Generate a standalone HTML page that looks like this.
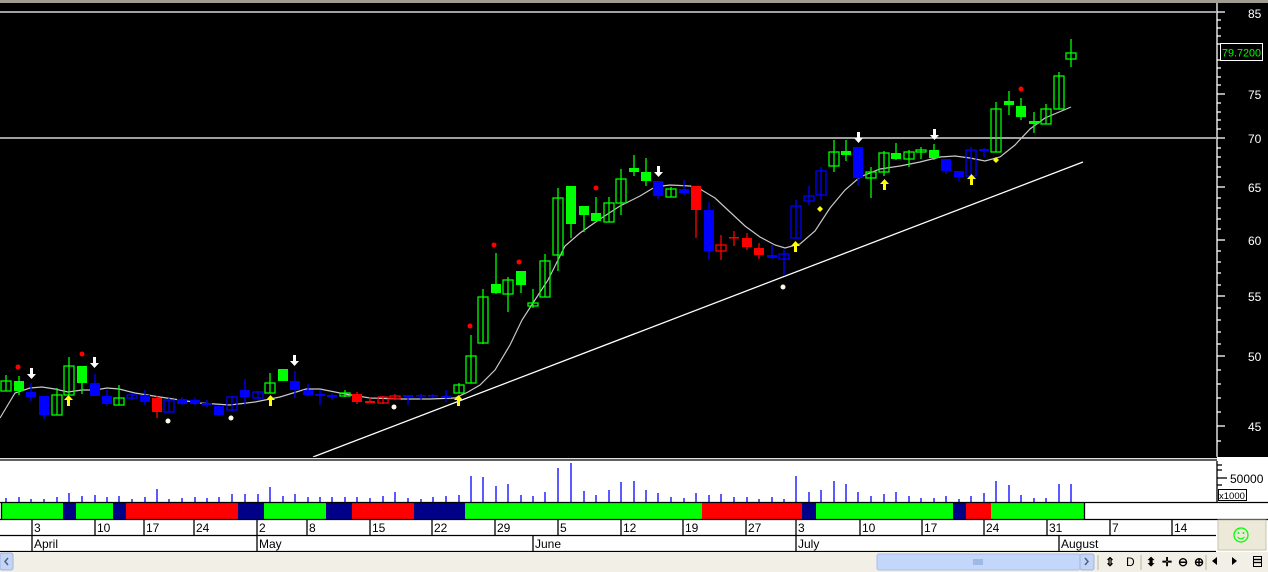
<!DOCTYPE html><html><head><meta charset="utf-8"><style>
body{margin:0;width:1268px;height:572px;overflow:hidden;background:#fff;font-family:"Liberation Sans",sans-serif}
svg{position:absolute;left:0;top:0}
.G line,.Gh line{stroke:#0f0}.B line,.Bh line{stroke:#00f}.R line,.Rh line{stroke:#f00}
line{stroke-width:1.3}
.G rect{fill:#0f0}.B rect{fill:#00f}.R rect{fill:#f00}
.Gh rect{fill:none;stroke:#0f0;stroke-width:1.3}.Bh rect{fill:none;stroke:#00f;stroke-width:1.3}.Rh rect{fill:none;stroke:#f00;stroke-width:1.3}
text{font-family:"Liberation Sans",sans-serif}
</style></head><body>
<svg width="1268" height="572" viewBox="0 0 1268 572">
<rect x="0" y="0" width="1268" height="3" fill="#a09c90"/>
<rect x="0" y="3" width="1268" height="454" fill="#000"/>
<line x1="0" y1="12" x2="1216" y2="12" stroke="#fff" stroke-width="1.5"/>
<line x1="0" y1="138" x2="1216" y2="138" stroke="#fff" stroke-width="1.5"/>
<line x1="1217" y1="3" x2="1217" y2="457" stroke="#fff"/>
<g stroke="#fff" stroke-width="1">
<line x1="1217" y1="12" x2="1225" y2="12"/><line x1="1217" y1="94" x2="1225" y2="94"/><line x1="1217" y1="138" x2="1225" y2="138"/><line x1="1217" y1="187" x2="1225" y2="187"/><line x1="1217" y1="240" x2="1225" y2="240"/><line x1="1217" y1="296" x2="1225" y2="296"/><line x1="1217" y1="356" x2="1225" y2="356"/><line x1="1217" y1="426" x2="1225" y2="426"/>
<line x1="1217" y1="20" x2="1221" y2="20"/><line x1="1217" y1="28" x2="1221" y2="28"/><line x1="1217" y1="36" x2="1221" y2="36"/><line x1="1217" y1="44" x2="1221" y2="44"/><line x1="1217" y1="60" x2="1221" y2="60"/><line x1="1217" y1="68" x2="1221" y2="68"/><line x1="1217" y1="77" x2="1221" y2="77"/><line x1="1217" y1="85" x2="1221" y2="85"/><line x1="1217" y1="103" x2="1221" y2="103"/><line x1="1217" y1="112" x2="1221" y2="112"/><line x1="1217" y1="120" x2="1221" y2="120"/><line x1="1217" y1="129" x2="1221" y2="129"/><line x1="1217" y1="148" x2="1221" y2="148"/><line x1="1217" y1="157" x2="1221" y2="157"/><line x1="1217" y1="167" x2="1221" y2="167"/><line x1="1217" y1="177" x2="1221" y2="177"/><line x1="1217" y1="198" x2="1221" y2="198"/><line x1="1217" y1="208" x2="1221" y2="208"/><line x1="1217" y1="219" x2="1221" y2="219"/><line x1="1217" y1="229" x2="1221" y2="229"/><line x1="1217" y1="251" x2="1221" y2="251"/><line x1="1217" y1="262" x2="1221" y2="262"/><line x1="1217" y1="273" x2="1221" y2="273"/><line x1="1217" y1="285" x2="1221" y2="285"/><line x1="1217" y1="308" x2="1221" y2="308"/><line x1="1217" y1="320" x2="1221" y2="320"/><line x1="1217" y1="332" x2="1221" y2="332"/><line x1="1217" y1="344" x2="1221" y2="344"/><line x1="1217" y1="370" x2="1221" y2="370"/><line x1="1217" y1="384" x2="1221" y2="384"/><line x1="1217" y1="398" x2="1221" y2="398"/><line x1="1217" y1="412" x2="1221" y2="412"/><line x1="1217" y1="441" x2="1221" y2="441"/>
</g>
<g fill="#fff" font-size="12">
<text x="1248" y="18">85</text><text x="1248" y="99">75</text><text x="1248" y="143">70</text><text x="1248" y="192">65</text><text x="1248" y="245">60</text><text x="1248" y="301">55</text><text x="1248" y="361">50</text><text x="1248" y="431">45</text>
</g>
<rect x="1220.5" y="43.5" width="42" height="17" fill="#000" stroke="#fff"/>
<text x="1222" y="56.5" fill="#0f0" font-size="11" textLength="39" lengthAdjust="spacingAndGlyphs">79.7200</text>
<line x1="313" y1="457" x2="1083" y2="162" stroke="#fff" stroke-width="1.5"/>
<polyline fill="none" stroke="#c8c8c8" stroke-width="1.2" points="0,418 15,393 30,388 42,387 55,389 68,392 82,390 95,390 107,388 119,389 135,393 160,397 200,403 230,405 255,402 280,397 306,389 320,389 345,394 370,398 400,399 430,399 455,398 468,392 480,385 495,370 510,345 522,320 533,303 548,280 565,246 580,233 600,219 620,206 640,196 655,187 670,185 690,186 700,189 715,198 730,212 745,226 760,237 775,245 785,248 800,244 815,231 830,208 845,190 860,177 880,169 900,166 920,162 940,157 955,156 970,158 985,161 1000,157 1015,145 1030,129 1045,118 1071,107"/>
<g class="Gh"><line x1="6" y1="375" x2="6" y2="391"/><rect x="1" y="381" width="10" height="10"/></g>
<g class="G"><line x1="19" y1="376" x2="19" y2="395"/><rect x="14" y="381" width="10" height="10"/></g>
<g class="B"><line x1="31" y1="383" x2="31" y2="401"/><rect x="26" y="392" width="10" height="5"/></g>
<g class="B"><line x1="44" y1="396" x2="44" y2="419"/><rect x="39" y="396" width="10" height="19"/></g>
<g class="Gh"><line x1="57" y1="388" x2="57" y2="415"/><rect x="52" y="395" width="10" height="20"/></g>
<g class="Gh"><line x1="69" y1="357" x2="69" y2="395"/><rect x="64" y="366" width="10" height="29"/></g>
<g class="G"><line x1="82" y1="366" x2="82" y2="394"/><rect x="77" y="366" width="10" height="17"/></g>
<g class="B"><line x1="95" y1="374" x2="95" y2="396"/><rect x="90" y="383" width="10" height="13"/></g>
<g class="B"><line x1="107" y1="390" x2="107" y2="406"/><rect x="102" y="396" width="10" height="8"/></g>
<g class="Gh"><line x1="119" y1="385" x2="119" y2="405"/><rect x="114" y="398" width="10" height="7"/></g>
<g class="Bh"><line x1="132" y1="393" x2="132" y2="400"/><rect x="127" y="395" width="10" height="3"/></g>
<g class="B"><line x1="145" y1="390" x2="145" y2="405"/><rect x="140" y="395" width="10" height="7"/></g>
<g class="R"><line x1="157" y1="396" x2="157" y2="418"/><rect x="152" y="398" width="10" height="14"/></g>
<g class="Bh"><line x1="169" y1="398" x2="169" y2="412"/><rect x="164" y="400" width="10" height="12"/></g>
<g class="B"><line x1="182" y1="397" x2="182" y2="405"/><rect x="177" y="399" width="10" height="5"/></g>
<g class="B"><line x1="195" y1="398" x2="195" y2="405"/><rect x="190" y="400" width="10" height="4"/></g>
<g class="B"><line x1="207" y1="400" x2="207" y2="407"/><rect x="202" y="403" width="10" height="2"/></g>
<g class="B"><line x1="219" y1="405" x2="219" y2="416"/><rect x="214" y="406" width="10" height="9"/></g>
<g class="Bh"><line x1="232" y1="396" x2="232" y2="411"/><rect x="227" y="397" width="10" height="13"/></g>
<g class="B"><line x1="245" y1="379" x2="245" y2="405"/><rect x="240" y="390" width="10" height="7"/></g>
<g class="Bh"><line x1="258" y1="391" x2="258" y2="399"/><rect x="253" y="392" width="10" height="6"/></g>
<g class="Gh"><line x1="270" y1="373" x2="270" y2="393"/><rect x="265" y="383" width="10" height="10"/></g>
<g class="G"><line x1="283" y1="369" x2="283" y2="381"/><rect x="278" y="369" width="10" height="12"/></g>
<g class="B"><line x1="295" y1="371" x2="295" y2="398"/><rect x="290" y="381" width="10" height="9"/></g>
<g class="B"><line x1="308" y1="384" x2="308" y2="396"/><rect x="303" y="390" width="10" height="5"/></g>
<g class="B"><line x1="320" y1="390" x2="320" y2="405"/><rect x="315" y="394" width="10" height="2"/></g>
<g class="B"><line x1="332" y1="393" x2="332" y2="400"/><rect x="327" y="395" width="10" height="2"/></g>
<g class="Gh"><line x1="345" y1="390" x2="345" y2="397"/><rect x="340" y="393" width="10" height="3"/></g>
<g class="R"><line x1="357" y1="392" x2="357" y2="404"/><rect x="352" y="394" width="10" height="8"/></g>
<g class="R"><line x1="370" y1="397" x2="370" y2="403"/><rect x="365" y="401" width="10" height="2"/></g>
<g class="Rh"><line x1="383" y1="396" x2="383" y2="404"/><rect x="378" y="397" width="10" height="6"/></g>
<g class="Rh"><line x1="395" y1="394" x2="395" y2="400"/><rect x="390" y="396" width="10" height="3"/></g>
<g class="B"><line x1="408" y1="395" x2="408" y2="405"/><rect x="403" y="395" width="10" height="2"/></g>
<g class="B"><line x1="421" y1="394" x2="421" y2="400"/><rect x="416" y="395" width="10" height="1.5"/></g>
<g class="B"><line x1="433" y1="394" x2="433" y2="398"/><rect x="428" y="395" width="10" height="1.5"/></g>
<g class="B"><line x1="446" y1="390" x2="446" y2="402"/><rect x="441" y="396" width="10" height="2"/></g>
<g class="Gh"><line x1="459" y1="383" x2="459" y2="393"/><rect x="454" y="385" width="10" height="8"/></g>
<g class="Gh"><line x1="471" y1="335" x2="471" y2="383"/><rect x="466" y="356" width="10" height="27"/></g>
<g class="Gh"><line x1="483" y1="289" x2="483" y2="344"/><rect x="478" y="297" width="10" height="46"/></g>
<g class="G"><line x1="496" y1="253" x2="496" y2="294"/><rect x="491" y="284" width="10" height="9"/></g>
<g class="Gh"><line x1="508" y1="277" x2="508" y2="312"/><rect x="503" y="280" width="10" height="14"/></g>
<g class="G"><line x1="521" y1="271" x2="521" y2="293"/><rect x="516" y="271" width="10" height="14"/></g>
<g class="Gh"><line x1="533" y1="289" x2="533" y2="308"/><rect x="528" y="303" width="10" height="3"/></g>
<g class="Gh"><line x1="545" y1="254" x2="545" y2="297"/><rect x="540" y="261" width="10" height="36"/></g>
<g class="Gh"><line x1="558" y1="188" x2="558" y2="271"/><rect x="553" y="198" width="10" height="57"/></g>
<g class="G"><line x1="571" y1="186" x2="571" y2="238"/><rect x="566" y="186" width="10" height="38"/></g>
<g class="G"><line x1="584" y1="206" x2="584" y2="232"/><rect x="579" y="206" width="10" height="9"/></g>
<g class="G"><line x1="596" y1="197" x2="596" y2="222"/><rect x="591" y="213" width="10" height="8"/></g>
<g class="Gh"><line x1="609" y1="197" x2="609" y2="222"/><rect x="604" y="203" width="10" height="19"/></g>
<g class="Gh"><line x1="621" y1="169" x2="621" y2="215"/><rect x="616" y="179" width="10" height="24"/></g>
<g class="G"><line x1="634" y1="155" x2="634" y2="176"/><rect x="629" y="168" width="10" height="4"/></g>
<g class="G"><line x1="646" y1="158" x2="646" y2="186"/><rect x="641" y="172" width="10" height="9"/></g>
<g class="B"><line x1="658" y1="181" x2="658" y2="199"/><rect x="653" y="181" width="10" height="15"/></g>
<g class="Gh"><line x1="671" y1="187" x2="671" y2="197"/><rect x="666" y="189" width="10" height="8"/></g>
<g class="B"><line x1="684" y1="180" x2="684" y2="195"/><rect x="679" y="189" width="10" height="4"/></g>
<g class="R"><line x1="696" y1="186" x2="696" y2="238"/><rect x="691" y="186" width="10" height="24"/></g>
<g class="B"><line x1="709" y1="202" x2="709" y2="260"/><rect x="704" y="210" width="10" height="41"/></g>
<g class="Rh"><line x1="721" y1="235" x2="721" y2="260"/><rect x="716" y="245" width="10" height="6"/></g>
<g class="R"><line x1="734" y1="231" x2="734" y2="246"/><rect x="729" y="237" width="10" height="1.5"/></g>
<g class="R"><line x1="747" y1="233" x2="747" y2="250"/><rect x="742" y="238" width="10" height="9"/></g>
<g class="R"><line x1="759" y1="243" x2="759" y2="259"/><rect x="754" y="248" width="10" height="7"/></g>
<g class="B"><line x1="772" y1="245" x2="772" y2="259"/><rect x="767" y="255" width="10" height="3"/></g>
<g class="Bh"><line x1="784" y1="250" x2="784" y2="276"/><rect x="779" y="254" width="10" height="5"/></g>
<g class="Bh"><line x1="796" y1="200" x2="796" y2="238"/><rect x="791" y="206" width="10" height="32"/></g>
<g class="Bh"><line x1="809" y1="186" x2="809" y2="205"/><rect x="804" y="196" width="10" height="5"/></g>
<g class="Bh"><line x1="821" y1="167" x2="821" y2="200"/><rect x="816" y="171" width="10" height="24"/></g>
<g class="Gh"><line x1="834" y1="140" x2="834" y2="172"/><rect x="829" y="152" width="10" height="14"/></g>
<g class="G"><line x1="846" y1="140" x2="846" y2="161"/><rect x="841" y="151" width="10" height="4"/></g>
<g class="B"><line x1="858" y1="147" x2="858" y2="186"/><rect x="853" y="147" width="10" height="31"/></g>
<g class="Gh"><line x1="871" y1="167" x2="871" y2="198"/><rect x="866" y="172" width="10" height="6"/></g>
<g class="Gh"><line x1="884" y1="151" x2="884" y2="176"/><rect x="879" y="153" width="10" height="19"/></g>
<g class="G"><line x1="896" y1="143" x2="896" y2="160"/><rect x="891" y="153" width="10" height="6"/></g>
<g class="Gh"><line x1="909" y1="150" x2="909" y2="167"/><rect x="904" y="152" width="10" height="7"/></g>
<g class="Gh"><line x1="921" y1="147" x2="921" y2="159"/><rect x="916" y="150" width="10" height="2"/></g>
<g class="G"><line x1="934" y1="144" x2="934" y2="160"/><rect x="929" y="150" width="10" height="8"/></g>
<g class="B"><line x1="946" y1="159" x2="946" y2="174"/><rect x="941" y="159" width="10" height="12"/></g>
<g class="B"><line x1="959" y1="171" x2="959" y2="181"/><rect x="954" y="171" width="10" height="6"/></g>
<g class="Bh"><line x1="971" y1="147" x2="971" y2="178"/><rect x="966" y="150" width="10" height="26"/></g>
<g class="B"><line x1="984" y1="148" x2="984" y2="157"/><rect x="979" y="149" width="10" height="2"/></g>
<g class="Gh"><line x1="996" y1="102" x2="996" y2="152"/><rect x="991" y="109" width="10" height="43"/></g>
<g class="G"><line x1="1009" y1="91" x2="1009" y2="115"/><rect x="1004" y="101" width="10" height="4"/></g>
<g class="G"><line x1="1021" y1="98" x2="1021" y2="120"/><rect x="1016" y="106" width="10" height="11"/></g>
<g class="G"><line x1="1034" y1="112" x2="1034" y2="133"/><rect x="1029" y="121" width="10" height="3"/></g>
<g class="Gh"><line x1="1046" y1="104" x2="1046" y2="124"/><rect x="1041" y="109" width="10" height="15"/></g>
<g class="Gh"><line x1="1059" y1="72" x2="1059" y2="109"/><rect x="1054" y="76" width="10" height="33"/></g>
<g class="Gh"><line x1="1071" y1="39" x2="1071" y2="67"/><rect x="1066" y="53" width="10" height="6"/></g>
<g fill="#f00"><circle cx="18" cy="367" r="2.5"/><circle cx="82" cy="354" r="2.5"/><circle cx="470" cy="326" r="2.5"/><circle cx="494" cy="245" r="2.5"/><circle cx="519" cy="262" r="2.5"/><circle cx="596" cy="188" r="2.5"/><circle cx="1021" cy="89" r="2.5"/></g>
<g fill="#fffbe8"><circle cx="168" cy="421" r="2.5"/><circle cx="231" cy="418" r="2.5"/><circle cx="394" cy="407" r="2.5"/><circle cx="783" cy="287" r="2.5"/></g>
<g fill="#ff0"><polygon points="820,206 823,209 820,212 817,209"/><polygon points="996,157 999,160 996,163 993,160"/></g>
<g fill="#fff">
<path d="M30,368h3v6h3l-4.5,5l-4.5,-5h3z"/><path d="M93,357h3v6h3l-4.5,5l-4.5,-5h3z"/><path d="M293,355h3v6h3l-4.5,5l-4.5,-5h3z"/><path d="M657,166h3v6h3l-4.5,5l-4.5,-5h3z"/><path d="M857,132h3v6h3l-4.5,5l-4.5,-5h3z"/><path d="M933,129h3v6h3l-4.5,5l-4.5,-5h3z"/>
</g>
<g fill="#ff0">
<path d="M67,406h3v-6h3l-4.5,-5l-4.5,5h3z"/><path d="M269,406h3v-6h3l-4.5,-5l-4.5,5h3z"/><path d="M457,406h3v-6h3l-4.5,-5l-4.5,5h3z"/><path d="M794,252h3v-6h3l-4.5,-5l-4.5,5h3z"/><path d="M883,190h3v-6h3l-4.5,-5l-4.5,5h3z"/><path d="M970,185h3v-6h3l-4.5,-5l-4.5,5h3z"/>
</g>
<rect x="0" y="457" width="1268" height="4" fill="#fff"/>
<line x1="0" y1="457.5" x2="1217" y2="457.5" stroke="#000" stroke-width="1"/>
<line x1="0" y1="460" x2="1217" y2="460" stroke="#000" stroke-width="1"/>
<line x1="1217" y1="461" x2="1217" y2="502" stroke="#000"/>
<g stroke="#000"><line x1="1217" y1="465" x2="1222" y2="465"/><line x1="1217" y1="470" x2="1222" y2="470"/><line x1="1217" y1="478" x2="1227" y2="478"/><line x1="1217" y1="485" x2="1222" y2="485"/></g>
<text x="1230" y="483" font-size="12" fill="#000">50000</text>
<rect x="1218.5" y="489.5" width="28" height="11" fill="#fff" stroke="#000"/>
<text x="1219" y="499" font-size="9.5" fill="#000">x1000</text>
<g stroke="#00f" stroke-width="3">
<line x1="6" y1="502" x2="6" y2="498"/><line x1="19" y1="502" x2="19" y2="497"/><line x1="31" y1="502" x2="31" y2="499"/><line x1="44" y1="502" x2="44" y2="499"/><line x1="57" y1="502" x2="57" y2="497"/><line x1="69" y1="502" x2="69" y2="493"/><line x1="82" y1="502" x2="82" y2="496"/><line x1="95" y1="502" x2="95" y2="495"/><line x1="107" y1="502" x2="107" y2="497"/><line x1="119" y1="502" x2="119" y2="496"/><line x1="132" y1="502" x2="132" y2="499"/><line x1="145" y1="502" x2="145" y2="497"/><line x1="157" y1="502" x2="157" y2="489"/><line x1="169" y1="502" x2="169" y2="499"/><line x1="182" y1="502" x2="182" y2="498"/><line x1="195" y1="502" x2="195" y2="497"/><line x1="207" y1="502" x2="207" y2="498"/><line x1="219" y1="502" x2="219" y2="497"/><line x1="232" y1="502" x2="232" y2="494"/><line x1="245" y1="502" x2="245" y2="494"/><line x1="258" y1="502" x2="258" y2="494"/><line x1="270" y1="502" x2="270" y2="487"/><line x1="283" y1="502" x2="283" y2="496"/><line x1="295" y1="502" x2="295" y2="494"/><line x1="308" y1="502" x2="308" y2="497"/><line x1="320" y1="502" x2="320" y2="497"/><line x1="332" y1="502" x2="332" y2="497"/><line x1="345" y1="502" x2="345" y2="497"/><line x1="357" y1="502" x2="357" y2="497"/><line x1="370" y1="502" x2="370" y2="498"/><line x1="383" y1="502" x2="383" y2="496"/><line x1="395" y1="502" x2="395" y2="492"/><line x1="408" y1="502" x2="408" y2="498"/><line x1="421" y1="502" x2="421" y2="499"/><line x1="433" y1="502" x2="433" y2="497"/><line x1="446" y1="502" x2="446" y2="496"/><line x1="459" y1="502" x2="459" y2="495"/><line x1="471" y1="502" x2="471" y2="476"/><line x1="483" y1="502" x2="483" y2="477"/><line x1="496" y1="502" x2="496" y2="486"/><line x1="508" y1="502" x2="508" y2="484"/><line x1="521" y1="502" x2="521" y2="495"/><line x1="533" y1="502" x2="533" y2="496"/><line x1="545" y1="502" x2="545" y2="492"/><line x1="558" y1="502" x2="558" y2="468"/><line x1="571" y1="502" x2="571" y2="463"/><line x1="584" y1="502" x2="584" y2="491"/><line x1="596" y1="502" x2="596" y2="495"/><line x1="609" y1="502" x2="609" y2="490"/><line x1="621" y1="502" x2="621" y2="482"/><line x1="634" y1="502" x2="634" y2="481"/><line x1="646" y1="502" x2="646" y2="490"/><line x1="658" y1="502" x2="658" y2="493"/><line x1="671" y1="502" x2="671" y2="497"/><line x1="684" y1="502" x2="684" y2="498"/><line x1="696" y1="502" x2="696" y2="493"/><line x1="709" y1="502" x2="709" y2="495"/><line x1="721" y1="502" x2="721" y2="494"/><line x1="734" y1="502" x2="734" y2="497"/><line x1="747" y1="502" x2="747" y2="497"/><line x1="759" y1="502" x2="759" y2="499"/><line x1="772" y1="502" x2="772" y2="497"/><line x1="784" y1="502" x2="784" y2="499"/><line x1="796" y1="502" x2="796" y2="476"/><line x1="809" y1="502" x2="809" y2="492"/><line x1="821" y1="502" x2="821" y2="490"/><line x1="834" y1="502" x2="834" y2="481"/><line x1="846" y1="502" x2="846" y2="484"/><line x1="858" y1="502" x2="858" y2="492"/><line x1="871" y1="502" x2="871" y2="496"/><line x1="884" y1="502" x2="884" y2="494"/><line x1="896" y1="502" x2="896" y2="492"/><line x1="909" y1="502" x2="909" y2="496"/><line x1="921" y1="502" x2="921" y2="498"/><line x1="934" y1="502" x2="934" y2="498"/><line x1="946" y1="502" x2="946" y2="496"/><line x1="959" y1="502" x2="959" y2="499"/><line x1="971" y1="502" x2="971" y2="496"/><line x1="984" y1="502" x2="984" y2="493"/><line x1="996" y1="502" x2="996" y2="481"/><line x1="1009" y1="502" x2="1009" y2="485"/><line x1="1021" y1="502" x2="1021" y2="495"/><line x1="1034" y1="502" x2="1034" y2="498"/><line x1="1046" y1="502" x2="1046" y2="498"/><line x1="1059" y1="502" x2="1059" y2="484"/><line x1="1071" y1="502" x2="1071" y2="484"/>
</g>
<rect x="0" y="502" width="1268" height="18" fill="#fff"/>
<rect x="1" y="502" width="62" height="17" fill="#0f0"/><rect x="63" y="502" width="13" height="17" fill="#008"/><rect x="76" y="502" width="37" height="17" fill="#0f0"/><rect x="113" y="502" width="13" height="17" fill="#008"/><rect x="126" y="502" width="112" height="17" fill="#f00"/><rect x="238" y="502" width="26" height="17" fill="#008"/><rect x="264" y="502" width="62" height="17" fill="#0f0"/><rect x="326" y="502" width="26" height="17" fill="#008"/><rect x="352" y="502" width="62" height="17" fill="#f00"/><rect x="414" y="502" width="51" height="17" fill="#008"/><rect x="465" y="502" width="237" height="17" fill="#0f0"/><rect x="702" y="502" width="100" height="17" fill="#f00"/><rect x="802" y="502" width="14" height="17" fill="#008"/><rect x="816" y="502" width="137" height="17" fill="#0f0"/><rect x="953" y="502" width="13" height="17" fill="#008"/><rect x="966" y="502" width="25" height="17" fill="#f00"/><rect x="991" y="502" width="93" height="17" fill="#0f0"/>
<g stroke="#000" fill="none"><line x1="0" y1="502.5" x2="1268" y2="502.5"/><line x1="0" y1="519.5" x2="1268" y2="519.5"/><line x1="1084.5" y1="502" x2="1084.5" y2="519"/><line x1="1.5" y1="502" x2="1.5" y2="519"/>
<line x1="0" y1="535.5" x2="1216" y2="535.5"/><line x1="0" y1="551.5" x2="1216" y2="551.5"/></g>
<g stroke="#000"><line x1="32" y1="520" x2="32" y2="552"/><line x1="95" y1="520" x2="95" y2="536"/><line x1="144" y1="520" x2="144" y2="536"/><line x1="194" y1="520" x2="194" y2="536"/><line x1="257" y1="520" x2="257" y2="552"/><line x1="307" y1="520" x2="307" y2="536"/><line x1="370" y1="520" x2="370" y2="536"/><line x1="432" y1="520" x2="432" y2="536"/><line x1="495" y1="520" x2="495" y2="536"/><line x1="533" y1="536" x2="533" y2="552"/><line x1="558" y1="520" x2="558" y2="536"/><line x1="621" y1="520" x2="621" y2="536"/><line x1="683" y1="520" x2="683" y2="536"/><line x1="746" y1="520" x2="746" y2="536"/><line x1="796" y1="520" x2="796" y2="552"/><line x1="860" y1="520" x2="860" y2="536"/><line x1="922" y1="520" x2="922" y2="536"/><line x1="984" y1="520" x2="984" y2="536"/><line x1="1047" y1="520" x2="1047" y2="536"/><line x1="1059" y1="536" x2="1059" y2="552"/><line x1="1110" y1="520" x2="1110" y2="536"/><line x1="1172" y1="520" x2="1172" y2="536"/></g>
<g font-size="12" fill="#000">
<text x="34" y="532">3</text><text x="97" y="532">10</text><text x="146" y="532">17</text><text x="196" y="532">24</text><text x="259" y="532">2</text><text x="309" y="532">8</text><text x="372" y="532">15</text><text x="434" y="532">22</text><text x="497" y="532">29</text><text x="560" y="532">5</text><text x="623" y="532">12</text><text x="685" y="532">19</text><text x="748" y="532">27</text><text x="798" y="532">3</text><text x="862" y="532">10</text><text x="924" y="532">17</text><text x="986" y="532">24</text><text x="1049" y="532">31</text><text x="1112" y="532">7</text><text x="1174" y="532">14</text>
<text x="34" y="548">April</text><text x="259" y="548">May</text><text x="535" y="548">June</text><text x="798" y="548">July</text><text x="1061" y="548">August</text>
</g>
<rect x="1218" y="520" width="48" height="30" fill="#ece9d8" stroke="#c8c4b0"/>
<circle cx="1241" cy="535" r="7" fill="none" stroke="#0f0" stroke-width="1.3"/><circle cx="1238.5" cy="533" r="1" fill="#0f0"/><circle cx="1243.5" cy="533" r="1" fill="#0f0"/><path d="M1237.5,537 Q1241,540.5 1244.5,537" fill="none" stroke="#0f0"/>
<rect x="0" y="552" width="1268" height="20" fill="#f2f0e6"/>
<rect x="0" y="553" width="13" height="17" fill="#c4d4f4" stroke="#9fb4e0" rx="2"/><path d="M8,558l-3,3.5l3,3.5" fill="none" stroke="#4d6185" stroke-width="1.5"/>
<rect x="877" y="554" width="203" height="16" fill="#c4d6fa" stroke="#a8bfe8" rx="2"/>
<g stroke="#8ea8dc"><line x1="974" y1="559" x2="974" y2="565"/><line x1="976" y1="559" x2="976" y2="565"/><line x1="978" y1="559" x2="978" y2="565"/><line x1="980" y1="559" x2="980" y2="565"/><line x1="982" y1="559" x2="982" y2="565"/></g>
<rect x="1080" y="554" width="14" height="16" fill="#c4d4f4" stroke="#9fb4e0" rx="2"/><path d="M1085,558l3,3.5l-3,3.5" fill="none" stroke="#4d6185" stroke-width="1.5"/>
<g fill="#000" font-size="12" font-weight="bold"><text x="1105" y="566">⇕</text><text x="1126" y="566" font-weight="normal">D</text><text x="1146" y="566">⬍</text><text x="1162" y="566">✛</text><text x="1178" y="566">⊖</text><text x="1194" y="566">⊕</text></g>
<path d="M1212,561l5,-4v8z M1232,557l5,4l-5,4z" fill="#000"/>
<rect x="1253.5" y="556.5" width="8" height="10" fill="none" stroke="#000"/><line x1="1254" y1="559.5" x2="1261" y2="559.5" stroke="#000"/><line x1="1254" y1="562.5" x2="1261" y2="562.5" stroke="#000"/>
<g stroke="#c8c4b0"><line x1="1098" y1="555" x2="1098" y2="570"/><line x1="1141" y1="555" x2="1141" y2="570"/><line x1="1206" y1="555" x2="1206" y2="570"/></g>
</svg>
</body></html>
